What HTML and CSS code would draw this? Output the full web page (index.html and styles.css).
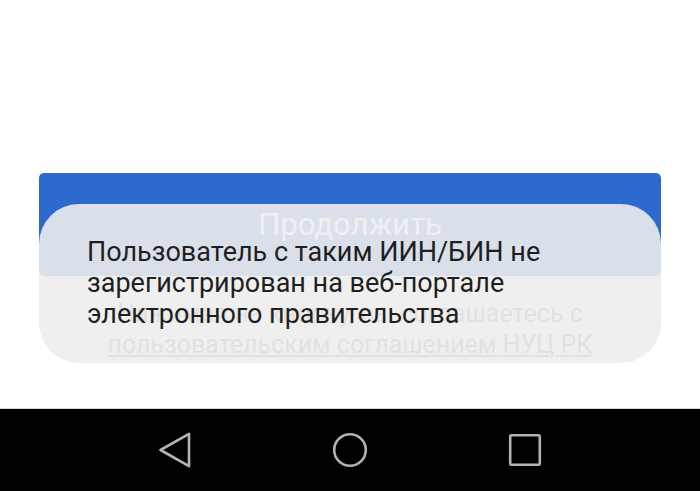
FILE: index.html
```html
<!DOCTYPE html>
<html lang="ru">
<head>
    <meta charset="UTF-8">
    <meta name="viewport" content="width=device-width, initial-scale=1.0">
    <title>Вход</title>
    <link rel="stylesheet" href="styles.css">
</head>
<body>
    <div class="screen">
        <div class="content">
            <button class="primary-button">Продолжить</button>
            <p class="terms">
                Нажимая на кнопку, вы соглашаетесь с<br>
                <a href="#" class="terms-link">пользовательским соглашением НУЦ РК</a>
            </p>

            <div class="toast">
                <p class="toast-text">Пользователь с таким ИИН/БИН не зарегистрирован на веб-портале электронного правительства</p>
            </div>
        </div>

        <nav class="nav-bar">
            <div class="nav-item">
                <svg width="36" height="36" viewBox="0 0 36 36">
                    <path d="M3.5 18 L32 1.8 L32 34.2 Z" class="nav-icon"/>
                </svg>
            </div>
            <div class="nav-item">
                <svg width="36" height="36" viewBox="0 0 36 36">
                    <circle cx="18" cy="18" r="15.8" class="nav-icon"/>
                </svg>
            </div>
            <div class="nav-item">
                <svg width="36" height="36" viewBox="0 0 36 36">
                    <rect x="3.2" y="3.2" width="29.6" height="29.6" rx="1.5" class="nav-icon"/>
                </svg>
            </div>
        </nav>
    </div>
</body>
</html>
```

FILE: styles.css
```css
* {
    box-sizing: border-box;
}

body {
    margin: 0;
    font-family: Roboto, 'Noto Sans', sans-serif;
    background: #fff;
}

.screen {
    width: 700px;
    height: 491px;
    display: flex;
    flex-direction: column;
    overflow: hidden;
}

.content {
    position: relative;
    flex: 1;
    padding: 173px 39px 0;
    border-bottom: 1px solid #d6d6d6;
}

.primary-button {
    display: block;
    width: 100%;
    height: 103px;
    border: none;
    border-radius: 5px;
    background: #2c6bcd;
    color: #fff;
    font-family: inherit;
    font-size: 31px;
    padding: 0;
}

.terms {
    margin: 22px 0 0;
    text-align: center;
    font-size: 25px;
    line-height: 31px;
    color: #6f6f6f;
}

.terms-link {
    color: #6f6f6f;
    text-decoration: underline;
}

.toast {
    position: absolute;
    top: 204px;
    left: 39px;
    right: 39px;
    height: 159px;
    border-radius: 40px;
    background: rgba(237, 237, 237, 0.9);
    display: flex;
    align-items: center;
    padding: 0 40px 0 48px;
}

.toast-text {
    margin: 0;
    font-size: 27px;
    line-height: 31px;
    color: #1f1f1f;
}

.nav-bar {
    height: 82px;
    background: #000;
    display: flex;
    justify-content: center;
    align-items: center;
}

.nav-item {
    width: 175px;
    display: flex;
    justify-content: center;
}

.nav-icon {
    fill: none;
    stroke: #b2b2b2;
    stroke-width: 2.6;
    stroke-linejoin: round;
}
```
